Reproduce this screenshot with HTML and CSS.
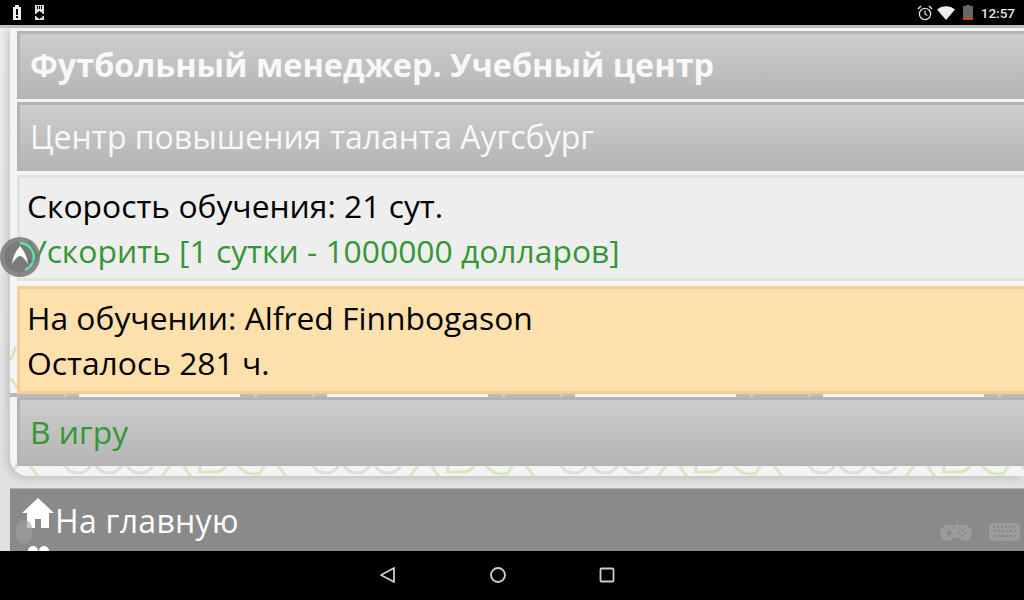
FILE: index.html
```html
<!DOCTYPE html>
<html lang="ru">
<head>
  <meta charset="UTF-8" />
  <title>Футбольный менеджер. Учебный центр</title>
  <link rel="stylesheet" href="styles.css">
</head>
<body>
  <div class="screen">
    <div class="statusbar">
      <div class="status-left">
        <svg width="10" height="15" viewBox="0 0 10 15"><path fill="#eee" d="M1 2h2V0h4v2h2v13H1z"/><path fill="#000" d="M4 4h2v6H4zM4 11h2v2H4z"/></svg>
        <svg width="11" height="15" viewBox="0 0 11 15"><path fill="#ddd" d="M1 0h9v15H1z"/><path fill="#000" d="M3 1h1v3H3zM5 1h1v3H5zM7 1h1v3H7z"/><circle cx="5.5" cy="10" r="3.2" fill="#000"/><path fill="#000" d="M1 9h2v2H1zM8 9h2v2H8zM5 6h1v8H5z"/></svg>
      </div>
      <div class="status-right">
        <svg class="ic-alarm" width="16" height="16" viewBox="0 0 16 16"><circle cx="8" cy="9" r="5.6" fill="none" stroke="#ddd" stroke-width="1.3"/><path d="M8 5.5V9l2.4 1.6" fill="none" stroke="#ddd" stroke-width="1.2"/><path d="M1 4l3-3M15 4l-3-3" stroke="#ddd" stroke-width="1.5"/></svg>
        <svg class="ic-wifi" width="18" height="14" viewBox="0 0 18 14"><path fill="#eee" d="M0 3.5C5-1 13-1 18 3.5L9 14z"/></svg>
        <svg class="ic-batt" width="10" height="15" viewBox="0 0 10 15"><path fill="#666" d="M3 0h4v1h3v12H0V1h3z"/><path fill="#d4411e" d="M0 13h10v2H0z"/></svg>
        <span class="clock">12:57</span>
      </div>
    </div>

    <div class="app">
      <div class="topline"></div>
      <div class="panel">
        <svg class="wallpaper" width="1014" height="448">
          <defs>
            <pattern id="tile" width="248" height="448" patternUnits="userSpaceOnUse">
              <rect x="230" y="365" width="18" height="4" fill="#bbb"/>
              <rect x="0" y="365" width="69" height="4" fill="#bbb"/>
              <rect x="244" y="365" width="3" height="4" fill="#c3dca6"/>
              <rect x="54" y="365" width="3" height="4" fill="#c3dca6"/>
              <g fill="none" stroke-width="3">
                <circle cx="68" cy="430" r="15" stroke="#dedede"/>
                <circle cx="99" cy="430" r="15" stroke="#dedede"/>
                <circle cx="130" cy="430" r="15" stroke="#dedede"/>
                <path d="M165 430l-14 20M168 430l14 20" stroke="#d5e8bc"/>
                <path d="M190 425v19h17q10-2 10-12" stroke="#d5e8bc"/>
                <circle cx="243" cy="430" r="16" stroke="#d5e8bc"/>
                <path d="M12 430l-14 20M15 430l14 20" stroke="#d5e8bc"/>
              </g>
            </pattern>
          </defs>
          <rect y="340" width="1014" height="108" fill="url(#tile)"/>
          <path d="M6 318L1 332M1 350l6 10" fill="none" stroke="#d5e8bc" stroke-width="2.5"/>
        </svg>
        <div class="row row-bar row-title">Футбольный менеджер. Учебный центр</div>
        <div class="row row-bar row-sub">Центр повышения таланта Аугсбург</div>
        <div class="row row-info">
          <div>Скорость обучения: 21 сут.</div>
          <div class="green">Ускорить [1 сутки - 1000000 долларов]</div>
        </div>
        <div class="row row-train">
          <div>На обучении: Alfred Finnbogason</div>
          <div>Осталось 281 ч.</div>
        </div>
        <div class="row row-bar row-play green">В игру</div>
      </div>

      <div class="footer">
        <div class="home-link">
          <svg class="ic-home" width="32" height="30" viewBox="0 0 32 30"><path fill="#fff" d="M16 0L0 15h5v15h8v-9h6v9h8V15h5z"/></svg>
          <span>На главную</span>
        </div>
        <svg class="ic-people" width="26" height="8" viewBox="0 0 26 8"><circle cx="6" cy="6" r="5" fill="#fff"/><circle cx="17" cy="6" r="5" fill="#fff"/></svg>
        <div class="ghost-mouse"></div>
        <svg class="ghost-pad" width="32" height="22" viewBox="0 0 32 22"><path fill="#9b9b9b" d="M8 6h16a8 8 0 0 1 0 16q-3 0-5-3h-6q-2 3-5 3A8 8 0 0 1 8 6z"/><path fill="#9b9b9b" d="M17 6V3q0-2-3-2V0q4 0 4 3v3z"/><path fill="#8a8a8a" d="M6 13h2v-2h2v2h2v2h-2v2H8v-2H6z"/><circle cx="22" cy="11" r="1.2" fill="#8a8a8a"/><circle cx="22" cy="17" r="1.2" fill="#8a8a8a"/><circle cx="19" cy="14" r="1.2" fill="#8a8a8a"/><circle cx="25" cy="14" r="1.2" fill="#8a8a8a"/></svg>
        <svg class="ghost-keys" width="31" height="18" viewBox="0 0 31 18"><rect width="31" height="18" rx="3" fill="#9b9b9b"/><path fill="#8a8a8a" d="M4 3h2v2H4zM8 3h2v2H8zM12 3h2v2h-2zM16 3h2v2h-2zM20 3h2v2h-2zM24 3h3v2h-3zM5 7h2v2H5zM9 7h2v2H9zM13 7h2v2h-2zM17 7h2v2h-2zM21 7h2v2h-2zM25 7h2v2h-2zM4 12h2v2H4zM8 12h15v2H8zM25 12h2v2h-2z"/></svg>
      </div>

      <div class="float-btn">
        <svg width="40" height="40" viewBox="0 0 40 40"><circle cx="20" cy="20" r="20" fill="#7c7c7c"/><circle cx="20" cy="20" r="15.5" fill="#6c6c6c"/><path d="M20 6a14 14 0 0 1 5 27" fill="none" stroke="#4fe0a0" stroke-width="2.5"/><path fill="#fff" d="M20 9q7 8 8 18-5-8-8-8t-8 8q1-10 8-18z"/></svg>
      </div>
    </div>

    <div class="navbar">
      <svg width="18" height="18" viewBox="0 0 18 18"><path d="M15 2v14L2 9z" fill="none" stroke="#ccc" stroke-width="1.8" stroke-linejoin="round"/></svg>
      <svg width="18" height="18" viewBox="0 0 18 18"><circle cx="9" cy="9" r="7" fill="none" stroke="#ccc" stroke-width="1.9"/></svg>
      <svg width="16" height="16" viewBox="0 0 16 16"><rect x="1.5" y="1.5" width="13" height="13" rx="1" fill="none" stroke="#ccc" stroke-width="1.8"/></svg>
    </div>
  </div>
</body>
</html>
```

FILE: styles.css
```css
html, body { margin: 0; padding: 0; }
body { font-family: "Open Sans", "Noto Sans", sans-serif; background: #000; overflow: hidden; }
svg { display: block; }

.screen { width: 1024px; height: 600px; display: flex; flex-direction: column; overflow: hidden; }

.statusbar { height: 25px; flex: none; background: #000; display: flex; justify-content: space-between; align-items: center; }
.status-left { display: flex; gap: 12px; padding-left: 12px; }
.status-right { display: flex; align-items: center; padding-right: 9px; }
.ic-alarm { margin-right: 4px; }
.ic-wifi { margin-right: 8px; }
.ic-batt { margin-right: 8px; }
.clock { color: #e4e4e4; font-family: "Roboto", sans-serif; font-size: 13.5px; font-weight: 500; }

.app { position: relative; flex: 1; background: linear-gradient(#eee, #e0e0e0); overflow: hidden; }
.topline { height: 3px; background: #c4c4c4; }

.panel { position: relative; margin-left: 10px; height: 448px; box-sizing: border-box; padding: 3px 0 0 7px; background: #f4f4f4; border-radius: 0 0 0 18px; box-shadow: -3px 2px 9px rgba(0,0,0,.16); display: flex; flex-direction: column; overflow: hidden; }
.wallpaper { position: absolute; left: 0; top: 0; filter: blur(.6px); }

.row { position: relative; flex: none; box-sizing: border-box; font-size: 31.8px; padding-left: 7px; }
.row-bar { display: flex; align-items: center; padding-left: 10px; background: linear-gradient(#cdcdcd, #b4b4b4); border-top: 3px solid #b4b4b4; border-left: 3px solid #b4b4b4; color: #f4f4f4; }
.row-title { height: 68px; padding-bottom: 5px; font-weight: 700; font-size: 32.4px; color: #f8f8f8; }
.row-sub { height: 69px; margin-top: 3px; padding-bottom: 3px; font-size: 32px; color: #f8f8f8; }
.row-info { height: 106px; margin-top: 4px; background: #eee; border: 3px solid #e2e2e2; border-right: 0; color: #000; padding-top: 5px; line-height: 45px; }
.row-train { height: 108px; margin-top: 5px; background: #fde0ac; border: 3px solid #f6cd96; border-right: 0; color: #000; padding-top: 6px; line-height: 45px; }
.row-play { height: 69px; margin-top: 3px; padding-bottom: 4px; }
.row-info .green, .row-play.green { color: #359735; }

.footer { position: relative; margin: 12px 0 0 10px; height: 70px; background: #8a8a8a; border-top: 1px solid #b0b0b0; overflow: hidden; }
.home-link { display: flex; align-items: flex-start; padding: 9px 0 0 12px; color: #fff; font-size: 32px; letter-spacing: .3px; line-height: 46px; }
.home-link span { margin-left: 1px; }
.ic-home { flex: none; }
.ic-people { position: absolute; left: 17px; top: 56px; }
.ghost-mouse { position: absolute; left: 6px; top: 31px; width: 16px; height: 24px; border-radius: 8px; background: #a0a0a0; opacity: .6; }
.ghost-pad { position: absolute; left: 930px; top: 30px; }
.ghost-keys { position: absolute; left: 979px; top: 34px; }

.float-btn { position: absolute; left: 0; top: 212px; opacity: .88; }

.navbar { height: 48px; flex: none; background: #000; display: flex; align-items: center; justify-content: center; gap: 92px; padding: 0 30px 1px 0; }
```
